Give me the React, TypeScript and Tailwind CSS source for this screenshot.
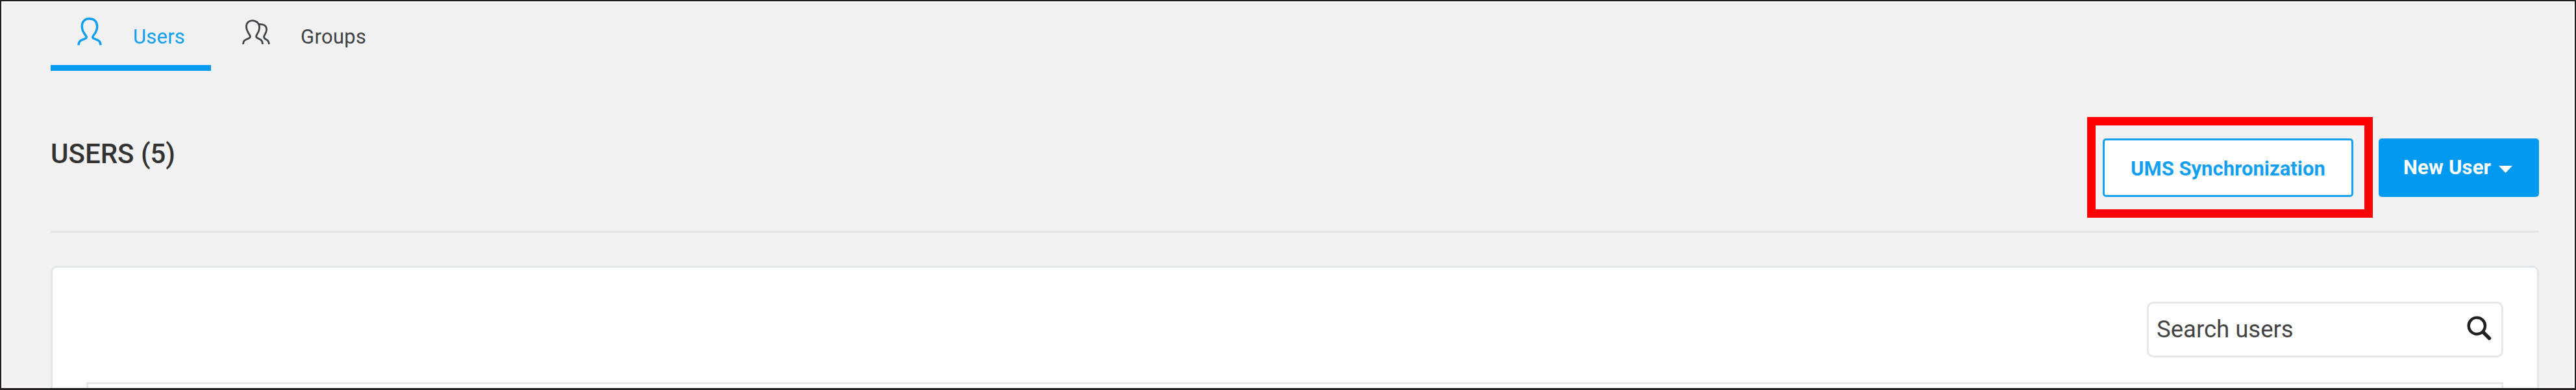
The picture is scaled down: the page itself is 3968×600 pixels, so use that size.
import React from "react";

function UserIcon() {
  return (
    <svg width="38" height="44" viewBox="0 0 38 44" fill="none" stroke="currentColor" strokeWidth="3.4">
      <path d="M2 42.5C2 35 8 34 12 32.5C14.5 31.3 15 30 13 27.5C9 22.5 7.3 19 7.3 14C7.3 5.5 12 1.8 18.7 1.8C25.5 1.8 30.7 5.5 30.7 14C30.7 19 29 22.5 25 27.5C23 30 23.5 31.3 26 32.5C30 34 36 35 36 42.5" />
    </svg>
  );
}

function GroupIcon() {
  return (
    <svg width="43" height="40" viewBox="0 0 43 40" fill="none" stroke="currentColor" strokeWidth="2.8">
      <path d="M1.5 38C1.5 31 7 31 11 28.5C13.5 27 12.5 25.5 11 23C8 18.5 6.5 16 6.5 11C6.5 4.8 10.5 1.6 16 1.6C19 1.6 21.5 2.8 24 5C26 7 26.8 10 26.5 13.5C26.2 17.5 24.8 20 22.5 23.5C21 26 21.5 27.5 24 28.8C28 30.8 31.5 31.5 31.5 38" />
      <path d="M25.5 7.5C32.5 6.5 38 9.5 37.6 16C37.3 20 35.5 22 34 25C33 27.5 33.5 28.5 35.5 29.8C38.5 31.5 41 32.5 41.5 38" />
    </svg>
  );
}

function SearchIcon() {
  return (
    <svg className="mt-px" width="38" height="38" viewBox="0 0 38 38" fill="none" stroke="#222" strokeLinecap="round">
      <circle cx="15.3" cy="15.3" r="12.7" strokeWidth="4.4" />
      <path d="M25 25L34.5 34.5" strokeWidth="5.4" />
    </svg>
  );
}

export default function App() {
  return (
    <div className="h-[600px] w-[3968px] overflow-hidden border-2 border-b-3 border-[#231f20] bg-[#f1f1f1] font-[Roboto,sans-serif]">
      <div className="flex h-full flex-col border-2 border-white pr-[53px] pl-[74px]">
        <nav className="flex h-[105px] shrink-0 items-start">
          <div className="flex h-full w-[247px] border-b-9 border-[#0099f0] pt-[23px] pl-[41px] text-[#0f9ff0]">
            <UserIcon />
            <span className="ml-[48px] pt-[12px] text-[31px] leading-[36px] tracking-[0.2px]">Users</span>
          </div>
          <div className="flex pt-[26px] pl-[48px] text-[#3f4246]">
            <GroupIcon />
            <span className="ml-[47px] pt-[9px] text-[31px] leading-[36px] tracking-[0.3px]">Groups</span>
          </div>
        </nav>
        <header className="flex h-[249px] shrink-0 justify-between border-b-3 border-[#e4e4e4]">
          <h1 className="pt-[104px] text-[42px] leading-[48px] font-medium text-[#333]">USERS (5)</h1>
          <div className="flex items-start pt-[71px]">
            <div className="h-[155px] w-[440px] border-13 border-[#ff0000] pt-[20px] pl-[11px]">
              <button className="h-[90px] w-[386px] rounded-[5px] border-3 border-[#16a0f1] bg-white pt-[4px] text-[31px] font-bold text-[#149fef]">UMS Synchronization</button>
            </div>
            <button className="mt-[33px] ml-[9px] flex h-[90px] w-[247px] items-center rounded-[5px] bg-[#0099f0] pl-[38px] text-[31px] font-bold text-white">
              <span className="tracking-[0.2px]">New User</span>
              <svg className="mt-[4px] ml-[12px]" width="21" height="11" viewBox="0 0 21 11" fill="currentColor"><path d="M0 0H21L10.5 11Z" /></svg>
            </button>
          </div>
        </header>
        <main className="mt-[51px] shrink-0 grow rounded-t-[10px] border-3 border-b-0 border-[#e1e6ea] bg-white px-[52px] pt-[52px]">
          <div className="ml-auto flex h-[86px] w-[549px] items-start justify-between rounded-[10px] border-3 border-[#e7e7e7] pt-[18px] pr-[15px] pl-[12px]">
            <span className="pt-px text-[36.5px] leading-[42px] text-[#444]">Search users</span>
            <SearchIcon />
          </div>
          <div className="mt-[38px] h-[12px] border-3 border-b-0 border-[#e7e7e7]" />
        </main>
      </div>
    </div>
  );
}
